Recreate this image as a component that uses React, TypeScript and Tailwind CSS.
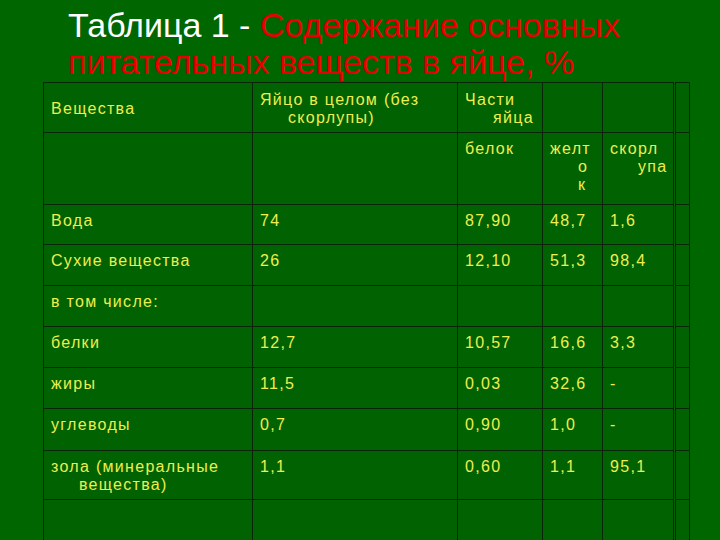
import React from 'react';

type CellText = string | string[];

const ROWS: { h: number; middle?: boolean; cells: CellText[] }[] = [
  { h: 50, middle: true, cells: ['Вещества', ['Яйцо в целом (без', 'скорлупы)'], ['Части', 'яйца'], '', '', ''] },
  { h: 72, cells: ['', '', 'белок', ['желт', 'о', 'к'], ['скорл', 'упа'], ''] },
  { h: 40, cells: ['Вода', '74', '87,90', '48,7', '1,6', ''] },
  { h: 41, cells: ['Сухие вещества', '26', '12,10', '51,3', '98,4', ''] },
  { h: 41, cells: ['в том числе:', '', '', '', '', ''] },
  { h: 41, cells: ['белки', '12,7', '10,57', '16,6', '3,3', ''] },
  { h: 41, cells: ['жиры', '11,5', '0,03', '32,6', '-', ''] },
  { h: 42, cells: ['углеводы', '0,7', '0,90', '1,0', '-', ''] },
  { h: 49, cells: [['зола (минеральные', 'вещества)'], '1,1', '0,60', '1,1', '95,1', ''] },
  { h: 50, cells: ['', '', '', '', '', ''] },
];

function Lines({ text }: { text: CellText }) {
  const lines = Array.isArray(text) ? text : [text];
  return (
    <>
      {lines.map((l, i) => (
        <div key={i} className={i > 0 ? 'pl-[28px] whitespace-nowrap' : 'whitespace-nowrap'}>
          {l}
        </div>
      ))}
    </>
  );
}

export default function App() {
  return (
    <div className="w-[720px] h-[540px] overflow-hidden bg-[#006600] font-['Liberation_Sans',Arial,sans-serif]">
      {/* Title */}
      <div className="pl-[68px] pt-[7px] text-[34px] leading-[37px]">
        <span className="text-white">Таблица 1 - </span>
        <span className="text-[#e80000]">Содержание основных</span>
        <br />
        <span className="text-[#e80000]">питательных веществ в яйце, %</span>
      </div>

      {/* Table */}
      <table className="ml-[43px] mt-px table-fixed border-collapse text-[16px] leading-[18px] tracking-[1.3px] text-[#eeee50] bg-[#006200]">
        <colgroup>
          <col className="w-[209px]" />
          <col className="w-[205px]" />
          <col className="w-[85px]" />
          <col className="w-[60px]" />
          <col className="w-[72px]" />
          <col className="w-[15px]" />
        </colgroup>
        <tbody>
          {ROWS.map((row, ri) => (
            <tr key={ri} style={{ height: row.h }}>
              {row.cells.map((c, ci) => (
                <td
                  key={ci}
                  className={`border border-[#0a240a] pl-[7px] pr-[4px] pt-[7px] pb-[4px] ${
                    row.middle ? 'align-middle' : 'align-top'
                  } ${ci === 5 ? 'border-l-[3px] border-l-[#0a240a] border-double' : ''}`}
                >
                  <Lines text={c} />
                </td>
              ))}
            </tr>
          ))}
        </tbody>
      </table>
    </div>
  );
}
